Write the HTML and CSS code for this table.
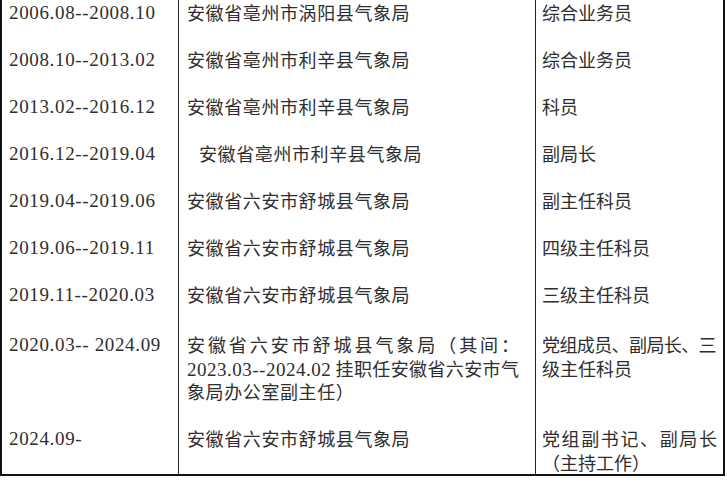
FILE: index.html
```html
<!DOCTYPE html>
<html lang="zh-CN">
<head>
<meta charset="utf-8">
<title>工作经历</title>
<link rel="stylesheet" href="styles.css">
</head>
<body>
<table class="resume">
  <colgroup>
    <col class="w1">
    <col class="w2">
    <col class="w3">
  </colgroup>
  <tr class="row first">
    <td class="c1">2006.08--2008.10</td>
    <td class="c2">安徽省亳州市涡阳县气象局</td>
    <td class="c3">综合业务员</td>
  </tr>
  <tr class="row">
    <td class="c1">2008.10--2013.02</td>
    <td class="c2">安徽省亳州市利辛县气象局</td>
    <td class="c3">综合业务员</td>
  </tr>
  <tr class="row">
    <td class="c1">2013.02--2016.12</td>
    <td class="c2">安徽省亳州市利辛县气象局</td>
    <td class="c3">科员</td>
  </tr>
  <tr class="row">
    <td class="c1">2016.12--2019.04</td>
    <td class="c2 indent">安徽省亳州市利辛县气象局</td>
    <td class="c3">副局长</td>
  </tr>
  <tr class="row">
    <td class="c1">2019.04--2019.06</td>
    <td class="c2">安徽省六安市舒城县气象局</td>
    <td class="c3">副主任科员</td>
  </tr>
  <tr class="row">
    <td class="c1">2019.06--2019.11</td>
    <td class="c2">安徽省六安市舒城县气象局</td>
    <td class="c3">四级主任科员</td>
  </tr>
  <tr class="row">
    <td class="c1">2019.11--2020.03</td>
    <td class="c2">安徽省六安市舒城县气象局</td>
    <td class="c3">三级主任科员</td>
  </tr>
  <tr class="row multi">
    <td class="c1 pre">2020.03-- 2024.09</td>
    <td class="c2">
      <div class="jl">安徽省六安市舒城县气象局（其间：</div>
      <div class="jl"><span class="num">2023.03--2024.02</span> 挂职任安徽省六安市气</div>
      <div>象局办公室副主任）</div>
    </td>
    <td class="c3">
      <div class="tight">党组成员、副局长、三</div>
      <div>级主任科员</div>
    </td>
  </tr>
  <tr class="row last">
    <td class="c1">2024.09-</td>
    <td class="c2">安徽省六安市舒城县气象局</td>
    <td class="c3">
      <div class="jl">党组副书记、副局长</div>
      <div>（主持工作）</div>
    </td>
  </tr>
</table>
</body>
</html>
```

FILE: styles.css
```css
html, body {
  margin: 0;
  padding: 0;
  background: #ffffff;
}

.resume {
  border-collapse: separate;
  border-spacing: 0;
  table-layout: fixed;
  width: 725px;
  font-family: "Noto Sans CJK SC", sans-serif;
  font-size: 18px;
  line-height: 23.5px;
  color: #2e2e2e;
}

.w1 { width: 179px; }
.w2 { width: 357px; }
.w3 { width: 189px; }

.resume td {
  vertical-align: top;
  padding-top: 12px;
  padding-bottom: 11.5px;
  white-space: nowrap;
}

.c1 {
  border-left: 2px solid #111;
  border-right: 1px solid #222;
  padding-left: 7px;
  padding-right: 4px;
  font-family: "Liberation Serif", serif;
  font-size: 19px;
  letter-spacing: 0.65px;
}

.c2 {
  border-right: 1px solid #222;
  padding-left: 8px;
  padding-right: 16px;
  letter-spacing: 0.6px;
}

.c2.indent {
  padding-left: 20px;
}

.c3 {
  border-right: 2px solid #111;
  padding-left: 6px;
  padding-right: 6px;
}

.num {
  font-family: "Liberation Serif", serif;
  font-size: 19px;
  letter-spacing: 0.5px;
  line-height: 18px;
}

.pre {
  white-space: pre;
}

.resume .first td {
  padding-top: 1.25px;
}

.resume .multi td {
  padding-top: 15px;
  padding-bottom: 12px;
}

.resume .last td {
  padding-top: 11.5px;
  padding-bottom: 0;
  border-bottom: 2px solid #111;
}

.jl {
  text-align: justify;
  text-align-last: justify;
  letter-spacing: 0;
}

.tight {
  letter-spacing: -0.6px;
}
```
